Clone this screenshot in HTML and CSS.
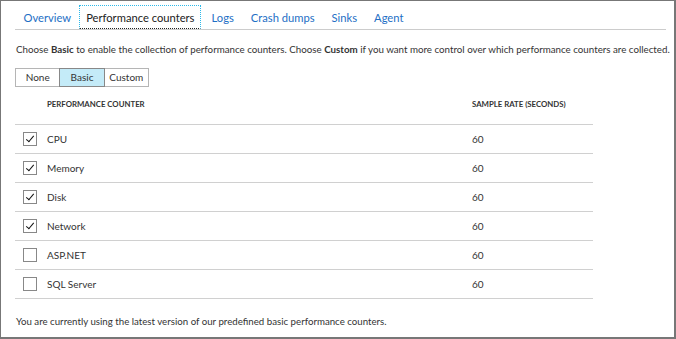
FILE: index.html
```html
<!DOCTYPE html>
<html lang="en">
<head>
  <meta charset="UTF-8" />
  <title>Performance counters</title>
  <link rel="stylesheet" href="styles.css">
</head>
<body>

<div class="frame">
  <div class="tabs">
    <a class="tab">Overview</a>
    <a class="tab active">Performance counters</a>
    <a class="tab">Logs</a>
    <a class="tab">Crash dumps</a>
    <a class="tab">Sinks</a>
    <a class="tab">Agent</a>
  </div>

  <p class="intro">Choose <b>Basic</b> to enable the collection of performance counters. Choose <b>Custom</b> if you want more control over which performance counters are collected.</p>

  <div class="toggle">
    <span class="opt">None</span>
    <span class="opt on">Basic</span>
    <span class="opt">Custom</span>
  </div>

  <div class="grid">
    <div class="row head"><span class="name">Performance counter</span><span class="rate">Sample rate (seconds)</span></div>
    <div class="row"><span class="box checked"></span><span class="name">CPU</span><span class="rate">60</span></div>
    <div class="row"><span class="box checked"></span><span class="name">Memory</span><span class="rate">60</span></div>
    <div class="row"><span class="box checked"></span><span class="name">Disk</span><span class="rate">60</span></div>
    <div class="row"><span class="box checked"></span><span class="name">Network</span><span class="rate">60</span></div>
    <div class="row"><span class="box"></span><span class="name">ASP.NET</span><span class="rate">60</span></div>
    <div class="row"><span class="box"></span><span class="name">SQL Server</span><span class="rate">60</span></div>
  </div>

  <p class="note">You are currently using the latest version of our predefined basic performance counters.</p>
</div>

</body>
</html>
```

FILE: styles.css
```css
* { margin: 0; padding: 0; box-sizing: border-box; }

html, body {
  width: 676px;
  height: 339px;
  overflow: hidden;
  background: #fff;
}

body {
  font-family: 'Lato', sans-serif;
  color: #333;
}

.frame {
  width: 676px;
  height: 339px;
  border: 1px solid #777;
  border-right-width: 2px;
  border-bottom-width: 2px;
  padding: 4px 8px 0 14px;
}

.tabs {
  display: flex;
  border-bottom: 1px solid #ccc;
  height: 25px;
}

.tab {
  font-size: 11.2px;
  line-height: 23px;
  color: #1e6fc5;
  padding: 0 7.5px;
  border: 1px solid transparent;
}

.tab:first-child { padding-right: 5.5px; }

.tab.active {
  color: #222;
  border: 1px dotted #2bb9ea;
  border-bottom: 1px dotted #222;
  padding: 0 6px;
  margin: 0 1.5px;
}

.intro {
  font-size: 9.75px;
  margin: 12px 0 0 1px;
  line-height: 14px;
  white-space: nowrap;
}

.toggle {
  display: flex;
  margin-top: 12px;
  width: 134px;
  height: 19px;
  border: 1px solid #b5b5b5;
}

.opt {
  flex: 1;
  font-size: 10px;
  line-height: 17px;
  text-align: center;
}

.opt + .opt { border-left: 1px solid #999; }

.opt.on {
  background: #c4ebf8;
  border: 1px solid #888;
  margin: -1px 0;
  line-height: 17px;
}

.opt.on + .opt { border-left: none; }

.grid {
  width: 578px;
  margin-top: 12px;
}

.row {
  display: flex;
  align-items: center;
  height: 29px;
  border-bottom: 1px solid #d0d0d0;
  font-size: 10px;
  padding-left: 8px;
}

.row.head {
  height: 26px;
  align-items: flex-start;
  padding-left: 32px;
  font-size: 7.8px;
  font-weight: 700;
  text-transform: uppercase;
}

.box {
  width: 14px;
  height: 14px;
  border: 1px solid #888;
  margin-right: 10px;
  position: relative;
}

.box.checked::after {
  content: "";
  position: absolute;
  left: 4px;
  top: 1px;
  width: 3px;
  height: 7px;
  border: solid #111;
  border-width: 0 1.6px 1.6px 0;
  transform: rotate(40deg);
}

.name { flex: 1; }

.rate {
  width: 121px;
}

.note {
  font-size: 9.7px;
  margin: 16px 0 0 1px;
}
```
